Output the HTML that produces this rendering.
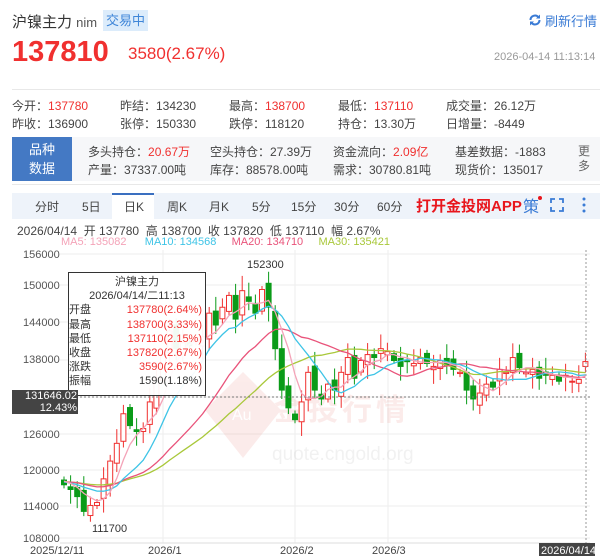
<!DOCTYPE html>
<html><head><meta charset="utf-8"><style>
body{margin:0;width:600px;height:556px;overflow:hidden;background:#fff;font-family:"Liberation Sans","Noto Sans CJK SC",sans-serif;color:#333;position:relative}
.a{position:absolute;white-space:nowrap}
.r{color:#f0302f}
.s{font-size:12px;color:#444}
</style></head><body>
<div class="a" style="left:12px;top:11px;font-size:15px;color:#333">沪镍主力 <span style="font-size:13px;color:#555">nim</span></div>
<div class="a" style="left:103px;top:10px;width:45px;height:21px;background:#dcecfb;color:#3f86d8;font-size:13px;line-height:21px;text-align:center">交易中</div>
<svg class="a" style="left:528px;top:13px" width="14" height="14" viewBox="0 0 14 14"><path d="M2.5 7a4.5 4.5 0 0 1 8-2.8" fill="none" stroke="#3a7bd5" stroke-width="2"/><path d="M11.5 7a4.5 4.5 0 0 1-8 2.8" fill="none" stroke="#3a7bd5" stroke-width="2"/><path d="M12 1.5v4h-4z" fill="#3a7bd5"/><path d="M2 12.5v-4h4z" fill="#3a7bd5"/></svg>
<div class="a" style="left:545px;top:11px;font-size:13px;color:#3a7bd5">刷新行情</div>
<div class="a r" style="left:12px;top:36px;font-size:29px;font-weight:bold">137810</div>
<div class="a r" style="left:128px;top:44px;font-size:17px">3580(2.67%)</div>
<div class="a" style="left:494px;top:51px;font-size:11px;color:#999">2026-04-14 11:13:14</div>
<div class="a" style="left:12px;top:89px;width:588px;height:1px;background:#e8e8e8"></div>
<div class="a s" style="left:12px;top:97px">今开：<span class="r">137780</span></div>
<div class="a s" style="left:120px;top:97px">昨结：134230</div>
<div class="a s" style="left:229px;top:97px">最高：<span class="r">138700</span></div>
<div class="a s" style="left:338px;top:97px">最低：<span class="r">137110</span></div>
<div class="a s" style="left:446px;top:97px">成交量：26.12万</div>
<div class="a s" style="left:12px;top:115px">昨收：136900</div>
<div class="a s" style="left:120px;top:115px">张停：150330</div>
<div class="a s" style="left:229px;top:115px">跌停：118120</div>
<div class="a s" style="left:338px;top:115px">持仓：13.30万</div>
<div class="a s" style="left:446px;top:115px">日增量：-8449</div>
<div class="a" style="left:12px;top:137px;width:588px;height:44px;background:#f6f7f9"></div>
<div class="a" style="left:12px;top:137px;width:60px;height:44px;background:#4479c4;color:#fff;font-size:13px;text-align:center;line-height:19px;padding-top:3px;box-sizing:border-box">品种<br>数据</div>
<div class="a s" style="left:88px;top:143px">多头持仓：<span class="r">20.67万</span></div>
<div class="a s" style="left:210px;top:143px">空头持仓：27.39万</div>
<div class="a s" style="left:333px;top:143px">资金流向：<span class="r">2.09亿</span></div>
<div class="a s" style="left:455px;top:143px">基差数据：-1883</div>
<div class="a s" style="left:88px;top:161px">产量：37337.00吨</div>
<div class="a s" style="left:210px;top:161px">库存：88578.00吨</div>
<div class="a s" style="left:333px;top:161px">需求：30780.81吨</div>
<div class="a s" style="left:455px;top:161px">现货价：135017</div>
<div class="a s" style="left:578px;top:144px;line-height:15px;color:#666;white-space:normal;width:12px">更多</div>
<div class="a" style="left:12px;top:184px;width:588px;height:1px;background:#e8e8e8"></div>
<div class="a" style="left:12px;top:193px;width:588px;height:26px;background:#eef3fa"></div>
<div class="a" style="left:112px;top:193px;width:42px;height:26px;background:#fff;border-top:2px solid #3a6fc0;box-sizing:border-box"></div>
<div class="a" style="left:0;top:198px;font-size:12px;color:#444">
<span class="a" style="left:35px">分时</span><span class="a" style="left:82px">5日</span><span class="a" style="left:124px">日K</span><span class="a" style="left:167px">周K</span><span class="a" style="left:209px">月K</span><span class="a" style="left:252px">5分</span><span class="a" style="left:291px">15分</span><span class="a" style="left:334px">30分</span><span class="a" style="left:377px">60分</span></div>
<div class="a" style="left:416px;top:195px;font-size:15px;font-weight:bold;color:#e8161d">打开金投网APP</div>
<div class="a" style="left:523px;top:193px;font-size:16px;color:#3a7bd5">策</div>
<div class="a" style="left:538px;top:196px;width:4px;height:4px;border-radius:50%;background:#e8161d"></div>
<svg class="a" style="left:550px;top:198px" width="14" height="14"><path d="M1 5V1h4M9 1h4v4M13 9v4H9M5 13H1V9" fill="none" stroke="#3a7bd5" stroke-width="1.8"/></svg>
<svg class="a" style="left:582px;top:197px" width="4" height="16"><circle cx="2" cy="2" r="1.5" fill="#3a7bd5"/><circle cx="2" cy="8" r="1.5" fill="#3a7bd5"/><circle cx="2" cy="14" r="1.5" fill="#3a7bd5"/></svg>
<div class="a" style="left:17px;top:222px;font-size:12px;color:#444">2026/04/14&nbsp; 开 137780&nbsp; 高 138700&nbsp; 收 137820&nbsp; 低 137110&nbsp; 幅 2.67%</div>
<div class="a" style="left:61px;top:236px;font-size:11px"><span style="color:#f4a3b8">MA5: 135082</span>&nbsp;&nbsp;&nbsp;&nbsp;&nbsp; <span style="color:#3ec4e6">MA10: 134568</span>&nbsp;&nbsp;&nbsp;&nbsp; <span style="color:#e9537a">MA20: 134710</span>&nbsp;&nbsp;&nbsp;&nbsp; <span style="color:#a9c83a">MA30: 135421</span></div>
<svg id="ch" class="a" style="left:0;top:0" width="600" height="556"></svg>
<div class="a" style="left:68px;top:272px;width:136px;height:122px;background:rgba(255,255,255,.95);border:1px solid #333;font-size:11px;line-height:14.2px;color:#333">
<div style="text-align:center;padding-top:2px">沪镍主力</div><div style="text-align:center">2026/04/14/二11:13</div>
<div>开盘<span style="float:right;color:#f0302f;margin-right:3px">137780(2.64%)</span></div>
<div>最高<span style="float:right;color:#f0302f;margin-right:3px">138700(3.33%)</span></div>
<div>最低<span style="float:right;color:#f0302f;margin-right:3px">137110(2.15%)</span></div>
<div>收盘<span style="float:right;color:#f0302f;margin-right:3px">137820(2.67%)</span></div>
<div>涨跌<span style="float:right;color:#f0302f;margin-right:3px">3590(2.67%)</span></div>
<div>振幅<span style="float:right;margin-right:3px">1590(1.18%)</span></div></div>
<div class="a" style="left:12px;top:390px;width:66px;height:24px;background:#444;color:#fff;font-size:11px;line-height:12px;text-align:right;padding-right:1px;box-sizing:border-box">131646.02<br>12.43%</div>
<script>
var C=[117000,116200,115000,112500,113500,114000,118000,121000,124000,129000,127000,126000,126500,131000,
135000,139000,143000,140000,141000,140500,141500,142000,146000,144000,147000,149000,145000,149800,148000,146000,150000,147000,140000,133000,130000,128000,
131000,136000,133000,131500,134000,133000,136000,138500,135000,138000,139000,138500,140000,139500,
138000,137000,137800,137500,138500,137500,137000,138000,137200,136500,136000,133000,131500,132500,134000,133500,136500,136000,138500,136800,136000,136500,
135000,135500,135500,134500,135500,134500,134800,137820];
var s='',Y=function(p){return 254+(156000-p)*0.005917};
[254,285,322,360,397,434,470,506,538].forEach(function(y){s+='<line x1="60" x2="590" y1="'+y+'" y2="'+y+'" stroke="#eee"/>'});
[163,295,388].forEach(function(x){s+='<line x1="'+x+'" x2="'+x+'" y1="250" y2="543" stroke="#eee"/>'});
s+='<line x1="60" x2="590" y1="543" y2="543" stroke="#ddd"/>';
s+='<g opacity=".11"><path d="M243 372l38 38-38 48-38-48z" fill="#e0524a"/><text x="232" y="420" font-size="16" fill="#fff">Au</text><text x="274" y="420" font-size="30" font-weight="bold" fill="#e0524a" letter-spacing="4">金投行情</text><text x="272" y="460" font-size="19" fill="#888">quote.cngold.org</text></g>';
var lab=[['156000',258],['150000',289],['144000',326],['138000',363],['126000',438],['120000',474],['114000',510],['108000',542]];
lab.forEach(function(l){s+='<text x="23" y="'+l[1]+'" font-size="11" fill="#555">'+l[0]+'</text>'});
[['2025/12/11',30],['2026/1',148],['2026/2',280],['2026/3',372]].forEach(function(l){s+='<text x="'+l[1]+'" y="554" font-size="11" fill="#444">'+l[0]+'</text>'});
var st=6.6,x0=64,pad=[];for(var i=0;i<30;i++)pad.push(117500+Math.sin(i)*800);var all=pad.concat(C);
function ma(n,col){var d='';for(var i=0;i<C.length;i++){var k=i+30,t=0;for(var j=0;j<n;j++)t+=all[k-j];d+=(i?'L':'M')+(x0+i*st).toFixed(1)+' '+Y(t/n).toFixed(1)}s+='<path d="'+d+'" fill="none" stroke="'+col+'" stroke-width="1.3"/>'}
for(var i=0;i<C.length;i++){var c=C[i],o=i?C[i-1]+((i*37)%7-3)*350:117800;if(i==C.length-1)o=137000;var h=Math.max(o,c)+600+((i*53)%5)*450,l=Math.min(o,c)-600-((i*29)%5)*450;if(i==3)l=111700;if(i==27)h=152300;var x=x0+i*st,up=c>=o,col=up?'#f0302f':'#0a9b18';
s+='<line x1="'+x+'" x2="'+x+'" y1="'+Y(h)+'" y2="'+Y(l)+'" stroke="'+col+'"/>';var yt=Y(Math.max(o,c)),hh=Math.max(1,Y(Math.min(o,c))-yt);
s+='<rect x="'+(x-2.5)+'" y="'+yt+'" width="5" height="'+hh+'" fill="'+(up?'#fff':col)+'" stroke="'+col+'"/>'}
ma(30,'#a9c83a');ma(20,'#e9537a');ma(10,'#3ec4e6');ma(5,'#f4a3b8');
s+='<text x="247" y="268" font-size="11" fill="#333">152300</text><text x="92" y="532" font-size="11" fill="#333">111700</text>';
s+='<line x1="60" x2="590" y1="397" y2="397" stroke="#777" stroke-dasharray="2,2"/><line x1="586" x2="586" y1="250" y2="543" stroke="#999" stroke-dasharray="2,2"/>';
s+='<rect x="539" y="543" width="56" height="13" fill="#444"/><text x="541" y="554" font-size="11" fill="#fff">2026/04/14</text>';
document.getElementById('ch').innerHTML=s;
</script>
</body></html>
